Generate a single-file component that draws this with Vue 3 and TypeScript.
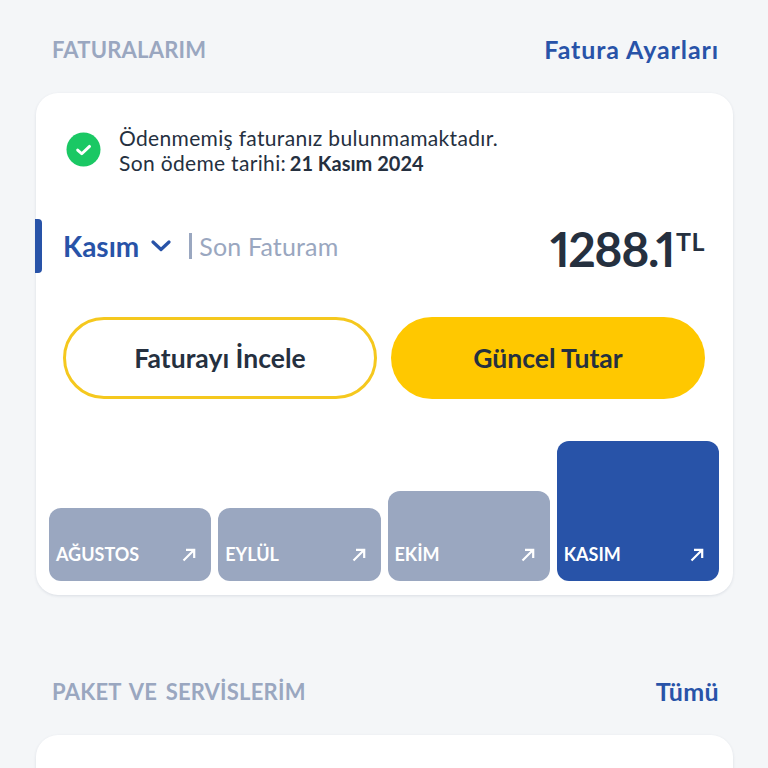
<script setup lang="ts">
interface Month { name: string; height: number; active?: boolean }
const months: Month[] = [
  { name: 'AĞUSTOS', height: 73 },
  { name: 'EYLÜL', height: 73 },
  { name: 'EKİM', height: 90 },
  { name: 'KASIM', height: 140, active: true },
]
</script>

<template>
  <div class="page">
    <header class="section-head">
      <h2 class="section-title">FATURALARIM</h2>
      <a class="section-link wide">Fatura Ayarları</a>
    </header>

    <section class="card bills">
      <div class="notice">
        <svg class="check" viewBox="0 0 36 36" aria-hidden="true">
          <circle cx="18" cy="18" r="17.5" fill="#1ac864" />
          <path d="M12 18.6l4.2 3.8 8-7.6" fill="none" stroke="#fff" stroke-width="3" stroke-linecap="round" stroke-linejoin="round" />
        </svg>
        <p class="notice-text">
          Ödenmemiş faturanız bulunmamaktadır.<br />
          Son ödeme tarihi: <b>21 Kasım 2024</b>
        </p>
      </div>

      <div class="summary">
        <span class="marker"></span>
        <span class="month">Kasım</span>
        <svg class="chevron" viewBox="0 0 20 12" aria-hidden="true">
          <path d="M2 2l8 7.5L18 2" fill="none" stroke="#2853a8" stroke-width="3.2" stroke-linecap="round" stroke-linejoin="round" />
        </svg>
        <span class="divider"></span>
        <span class="last">Son Faturam</span>
        <span class="amount">1288.1<sup>TL</sup></span>
      </div>

      <div class="actions">
        <button class="btn outline">Faturayı İncele</button>
        <button class="btn solid">Güncel Tutar</button>
      </div>

      <div class="chart">
        <div
          v-for="m in months"
          :key="m.name"
          class="bar"
          :class="{ active: m.active }"
          :style="{ height: m.height + 'px' }"
        >
          <span>{{ m.name }}</span>
          <svg class="arrow" viewBox="0 0 16 16" aria-hidden="true">
            <path d="M2.5 13.5L13 3M5 2.8h8.2V11" fill="none" stroke="#fff" stroke-width="2.2" />
          </svg>
        </div>
      </div>
    </section>

    <header class="section-head second">
      <h2 class="section-title">PAKET VE SERVİSLERİM</h2>
      <a class="section-link">Tümü</a>
    </header>

    <section class="card packages"></section>
  </div>
</template>

<style scoped>
.page {
  width: 768px;
  height: 768px;
  overflow: hidden;
  box-sizing: border-box;
  padding: 36px 35px 0 36px;
  background: #f4f6f8;
  font-family: "Lato", "Noto Sans", sans-serif;
  color: #25303f;
}
.section-head {
  display: flex;
  align-items: center;
  justify-content: space-between;
  box-sizing: border-box;
  height: 29px;
  padding: 0 14px 2px 16px;
  margin-bottom: 28px;
}
.section-head.second {
  margin-top: 83px;
}
.section-title {
  margin: 0;
  font-size: 22px;
  font-weight: 700;
  letter-spacing: 0.2px;
  word-spacing: 3px;
  color: #9aa7c0;
}
.section-link {
  font-size: 25px;
  font-weight: 700;
  letter-spacing: 0.35px;
  margin-bottom: 2px;
  color: #2853a8;
}
.section-link.wide {
  letter-spacing: 0.9px;
}
.card {
  background: #fff;
  border-radius: 22px;
  box-shadow: 0 1px 3px rgba(40, 60, 90, 0.12);
}
.bills {
  height: 502px;
  box-sizing: border-box;
  padding: 32px 14px 14px 13px;
  display: flex;
  flex-direction: column;
}
.packages {
  height: 80px;
}
.notice {
  display: flex;
  align-items: center;
  gap: 18px;
  padding-left: 17px;
}
.check {
  width: 35px;
  height: 35px;
  flex: none;
  margin-top: -3px;
}
.notice-text {
  margin: 0;
  font-size: 21px;
  line-height: 25px;
  letter-spacing: 0.33px;
  color: #25303f;
}
.notice-text b {
  margin-left: -2px;
  font-size: 20px;
  font-weight: 700;
  letter-spacing: 0;
}
.summary {
  position: relative;
  display: flex;
  align-items: center;
  height: 54px;
  margin-top: 43px;
  padding: 0 14px;
}
.marker {
  position: absolute;
  left: -14px;
  top: 0;
  width: 7px;
  height: 54px;
  background: #2853a8;
  border-radius: 0 4px 4px 0;
}
.month {
  font-size: 28px;
  font-weight: 700;
  color: #2853a8;
}
.chevron {
  width: 20px;
  height: 12px;
  margin-left: 12px;
}
.divider {
  width: 3px;
  height: 26px;
  margin: 0 7px 0 18px;
  background: #9aa7c0;
}
.last {
  font-size: 25px;
  letter-spacing: 0.15px;
  color: #9aa7c0;
}
.amount {
  margin-left: auto;
  padding-top: 4px;
  font-size: 48px;
  font-weight: 700;
  font-variant-numeric: proportional-nums;
  color: #25303f;
  letter-spacing: -1.5px;
}
.amount sup {
  font-size: 25px;
  letter-spacing: 0.5px;
  margin-left: 2px;
  vertical-align: 16px;
  line-height: 0;
}
.actions {
  display: grid;
  grid-template-columns: 1fr 1fr;
  gap: 14px;
  margin-top: 44px;
  padding: 0 14px;
}
.btn {
  height: 82px;
  padding: 0;
  border-radius: 42px;
  box-sizing: border-box;
  font-family: inherit;
  font-size: 26.5px;
  font-weight: 700;
  color: #25303f;
  cursor: pointer;
}
.outline {
  background: #fff;
  border: 3px solid #f5c81e;
}
.solid {
  background: #ffc800;
  border: none;
}
.chart {
  margin-top: auto;
  display: flex;
  align-items: flex-end;
  gap: 7px;
}
.bar {
  flex: 1 1 0;
  box-sizing: border-box;
  display: flex;
  align-items: flex-end;
  justify-content: space-between;
  padding: 0 14px 16px 7px;
  background: #9aa7c0;
  border-radius: 12px;
  color: #fff;
  font-size: 18px;
  font-weight: 700;
}
.bar.active {
  background: #2853a8;
}
.arrow {
  width: 16px;
  height: 16px;
  margin-bottom: 2px;
}
</style>
